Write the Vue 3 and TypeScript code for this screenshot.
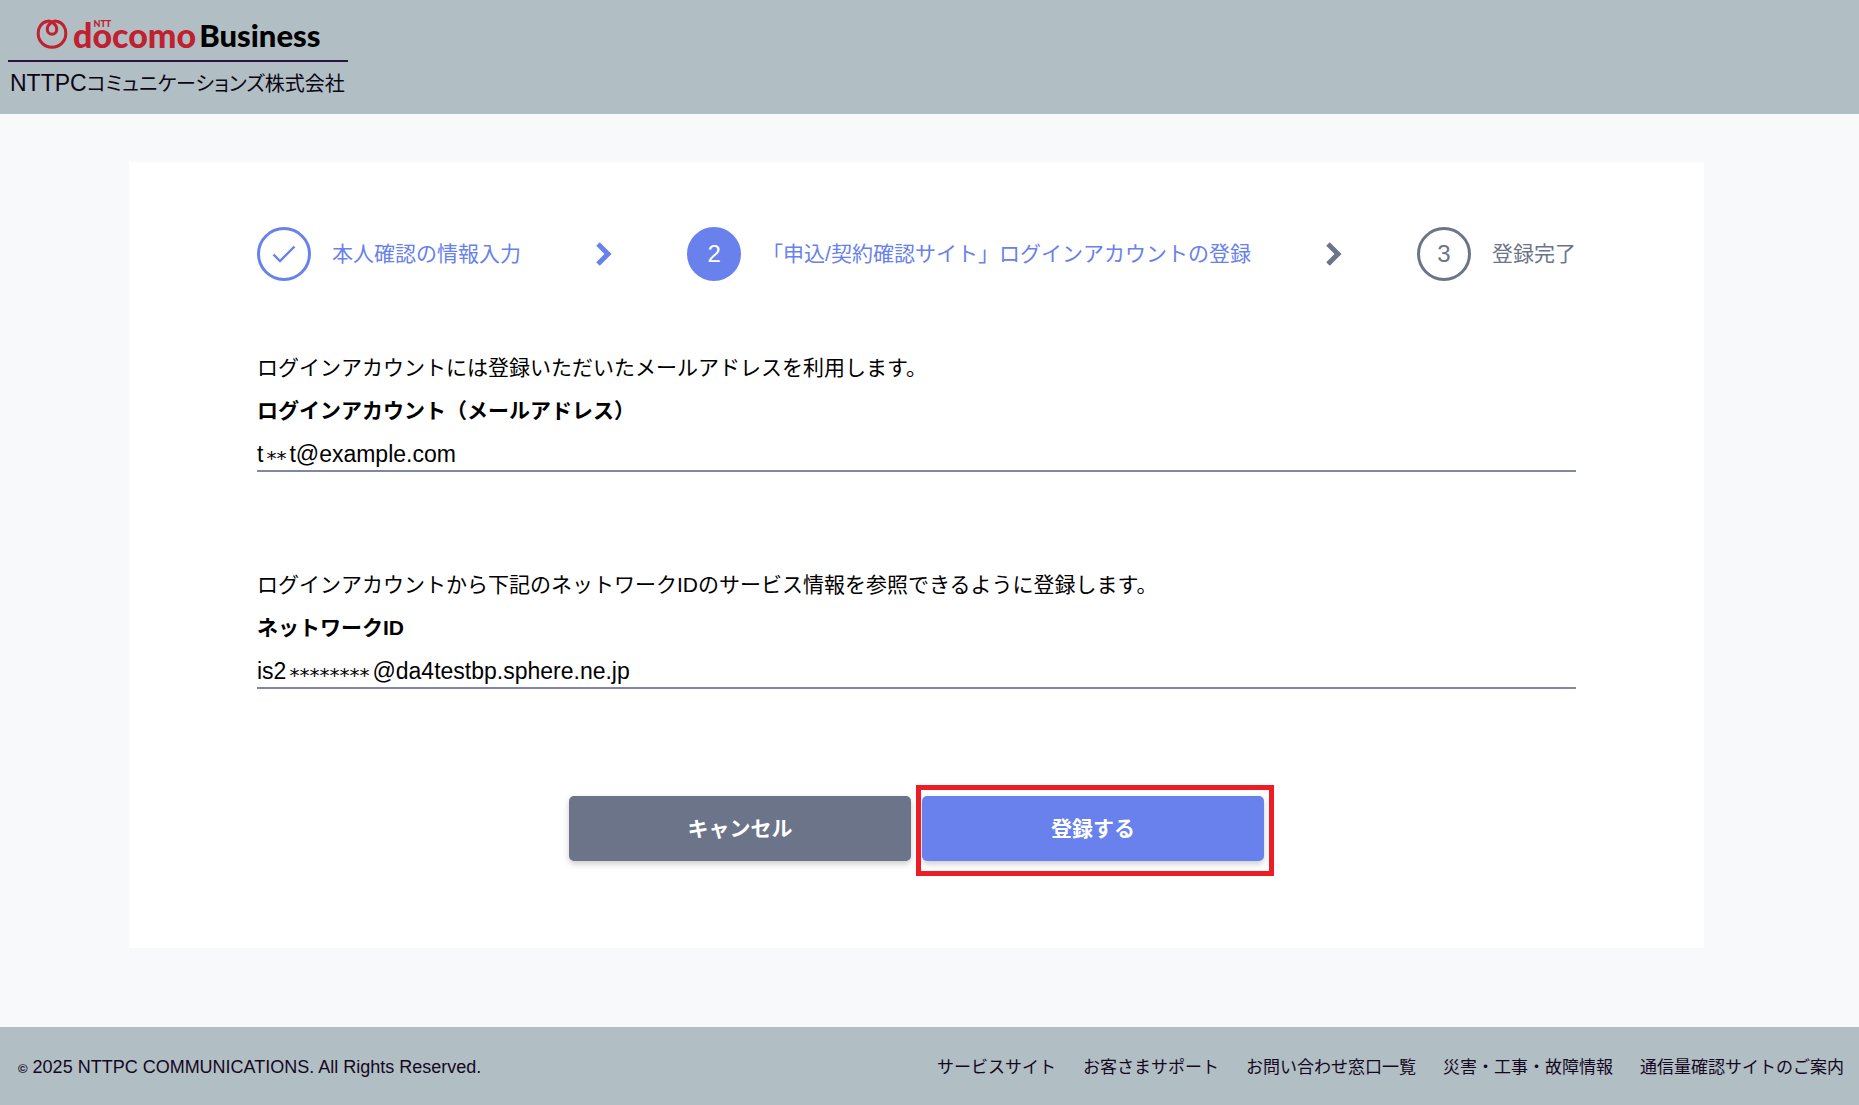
<script setup lang="ts">
interface FooterLink { label: string; href: string }
interface Field { id: string; note: string; label: string; head: string; mask: string; tail: string }

const fields: Field[] = [
  { id: 'account', note: 'ログインアカウントには登録いただいたメールアドレスを利用します。', label: 'ログインアカウント（メールアドレス）', head: 't', mask: '**', tail: 't@example.com' },
  { id: 'network', note: 'ログインアカウントから下記のネットワークIDのサービス情報を参照できるように登録します。', label: 'ネットワークID', head: 'is2', mask: '********', tail: '@da4testbp.sphere.ne.jp' },
]

const links: FooterLink[] = [
  { label: 'サービスサイト', href: '#service' },
  { label: 'お客さまサポート', href: '#support' },
  { label: 'お問い合わせ窓口一覧', href: '#contact' },
  { label: '災害・工事・故障情報', href: '#status' },
  { label: '通信量確認サイトのご案内', href: '#traffic' },
]
</script>

<template>
  <div class="page">
    <header class="header">
      <div class="brand">
        <div class="logo">
          <svg class="emblem" viewBox="0 0 32 32" aria-hidden="true">
            <path d="M11.5 3.2C5.500 4 2.200 9.500 2.200 15.500C2.200 23.500 8.500 29.300 16 29.300S29.800 23.500 29.800 15.500C29.800 9.500 26.500 4 20.500 3.200C17.500 2.600 11.300 6 11.300 11.200C11.300 14.200 13.300 16.200 16 16.200S20.700 14.200 20.700 11.200C20.700 6 14.500 2.600 11.500 3.200Z" />
          </svg>
          <span class="docomo">d<span class="o-mark">o<small class="ntt">NTT</small></span>como</span>
          <span class="business">Business</span>
        </div>
        <div class="company"><span class="latin">NTTPC</span>コミュニケーションズ株式会社</div>
      </div>
    </header>

    <main class="main">
      <section class="card">
        <ol class="steps">
          <li class="step done">
            <span class="circle"><svg class="check" viewBox="0 0 24 18" aria-hidden="true"><path d="M1.500 9.500L8 16L22.500 1.500" /></svg></span>
            <span>本人確認の情報入力</span>
          </li>
          <li class="arrow done" aria-hidden="true"><svg viewBox="0 0 16 24"><path d="M2 2L12 12L2 22" /></svg></li>
          <li class="step current">
            <span class="circle">2</span>
            <span>「申込/契約確認サイト」ログインアカウントの登録</span>
          </li>
          <li class="arrow" aria-hidden="true"><svg viewBox="0 0 16 24"><path d="M2 2L12 12L2 22" /></svg></li>
          <li class="step">
            <span class="circle">3</span>
            <span>登録完了</span>
          </li>
        </ol>

        <form class="form" @submit.prevent>
          <div v-for="field in fields" :key="field.id" class="field">
            <p class="note">{{ field.note }}</p>
            <label class="label" :for="field.id">{{ field.label }}</label>
            <output :id="field.id" class="value">{{ field.head }}<span class="mask">{{ field.mask }}</span>{{ field.tail }}</output>
          </div>
          <div class="actions">
            <button class="button cancel" type="button">キャンセル</button>
            <div class="highlight"><button class="button submit" type="submit">登録する</button></div>
          </div>
        </form>
      </section>
    </main>

    <footer class="footer">
      <small class="copyright"><span class="mark">©</span> 2025 NTTPC COMMUNICATIONS. All Rights Reserved.</small>
      <nav class="links">
        <a v-for="link in links" :key="link.href" :href="link.href">{{ link.label }}</a>
      </nav>
    </footer>
  </div>
</template>

<style>
body {
  margin: 0;
}
</style>

<style scoped>
.page {
  display: flex;
  flex-direction: column;
  min-height: 100vh;
  background: #f8f9fb;
  color: #000;
  font-family: "Liberation Sans", "Noto Sans CJK JP", sans-serif;
  font-size: 21px;
}

.header {
  padding: 16px 8px 15px;
  background: #b1bec4;
}

.brand {
  width: 340px;
}

.logo {
  display: flex;
  align-items: center;
  height: 46px;
  padding: 0 0 0 28px;
  box-sizing: border-box;
  border-bottom: 2px solid #2a1440;
  font-family: Lato, sans-serif;
  font-size: 31px;
  font-weight: 900;
  line-height: 40px;
}

.emblem {
  width: 32px;
  height: 32px;
  margin: 0 5px 8px 0;
  fill: none;
  stroke: #c0202f;
  stroke-width: 3;
}

.docomo {
  margin-right: 3px;
  padding-bottom: 6px;
  color: #c0202f;
  font-size: 34px;
}

.business {
  padding-bottom: 6px;
}

.o-mark {
  position: relative;
}

.ntt {
  position: absolute;
  top: 6px;
  left: 1px;
  font-size: 9px;
  line-height: 8px;
}

.company {
  padding: 5px 2px 0;
  color: #0b0614;
  font-family: "Noto Sans CJK JP", sans-serif;
  font-size: 20px;
  line-height: 32px;
  white-space: nowrap;
  font-feature-settings: "palt";
}

.latin {
  font-family: "Liberation Sans", sans-serif;
  font-size: 23px;
}

.main {
  flex: 1;
  padding: 48px 155px 78px 129px;
}

.card {
  padding: 65px 128px 87px;
  background: #fff;
}

.steps {
  display: flex;
  align-items: center;
  justify-content: space-between;
  margin: 0;
  padding: 0;
  color: #6b7489;
  line-height: 32px;
  list-style: none;
  white-space: nowrap;
}

.step {
  display: flex;
  align-items: center;
  gap: 21px;
}

.circle {
  display: flex;
  align-items: center;
  justify-content: center;
  box-sizing: border-box;
  width: 54px;
  height: 54px;
  border: 3px solid currentColor;
  border-radius: 50%;
  font-size: 24px;
}

.done,
.current {
  color: #6881ec;
}

.current .circle {
  border-color: #6881ec;
  background: #6881ec;
  color: #fff;
}

.check {
  width: 24px;
  height: 18px;
  fill: none;
  stroke: currentColor;
  stroke-width: 2.4;
}

.arrow {
  display: flex;
}

.arrow svg {
  width: 16px;
  height: 24px;
  fill: none;
  stroke: currentColor;
  stroke-width: 5;
}

.form {
  padding-top: 65px;
}

.field {
  display: flex;
  flex-direction: column;
  margin-bottom: 91px;
}

.note,
.label {
  margin: 0;
  line-height: 43px;
}

.label {
  font-weight: 700;
}

.value {
  height: 40px;
  padding-top: 6px;
  box-sizing: border-box;
  border-bottom: 2px solid #8187a0;
  font-size: 23px;
  line-height: 32px;
}

.mask {
  padding: 0 3px;
  font-family: "DejaVu Sans", sans-serif;
  font-size: 20px;
  line-height: 20px;
  vertical-align: -3px;
}

.actions {
  display: flex;
  justify-content: center;
  gap: 11px;
  padding-top: 16px;
}

.button {
  width: 342px;
  height: 65px;
  border: 0;
  border-radius: 5px;
  box-shadow: 0 3px 6px rgba(0, 0, 0, 0.2);
  color: #fff;
  font: 700 21px/32px "Liberation Sans", "Noto Sans CJK JP", sans-serif;
}

.cancel {
  background: #6b7489;
}

.submit {
  background: #6881ec;
}

.highlight {
  position: relative;
}

.highlight::after {
  content: "";
  position: absolute;
  inset: -11px -10px -15px -6px;
  border: 5px solid #ee1c25;
  pointer-events: none;
}

.footer {
  display: flex;
  align-items: center;
  justify-content: space-between;
  min-height: 78px;
  padding: 4px 15px 0 18px;
  box-sizing: border-box;
  background: #b1bec4;
  color: #14081f;
  font-size: 17px;
  line-height: 24px;
}

.copyright {
  font-size: 18px;
}

.mark {
  font-size: 13px;
  font-weight: 700;
}

.links {
  display: flex;
  gap: 27px;
}

.links a {
  color: inherit;
  text-decoration: none;
}
</style>
